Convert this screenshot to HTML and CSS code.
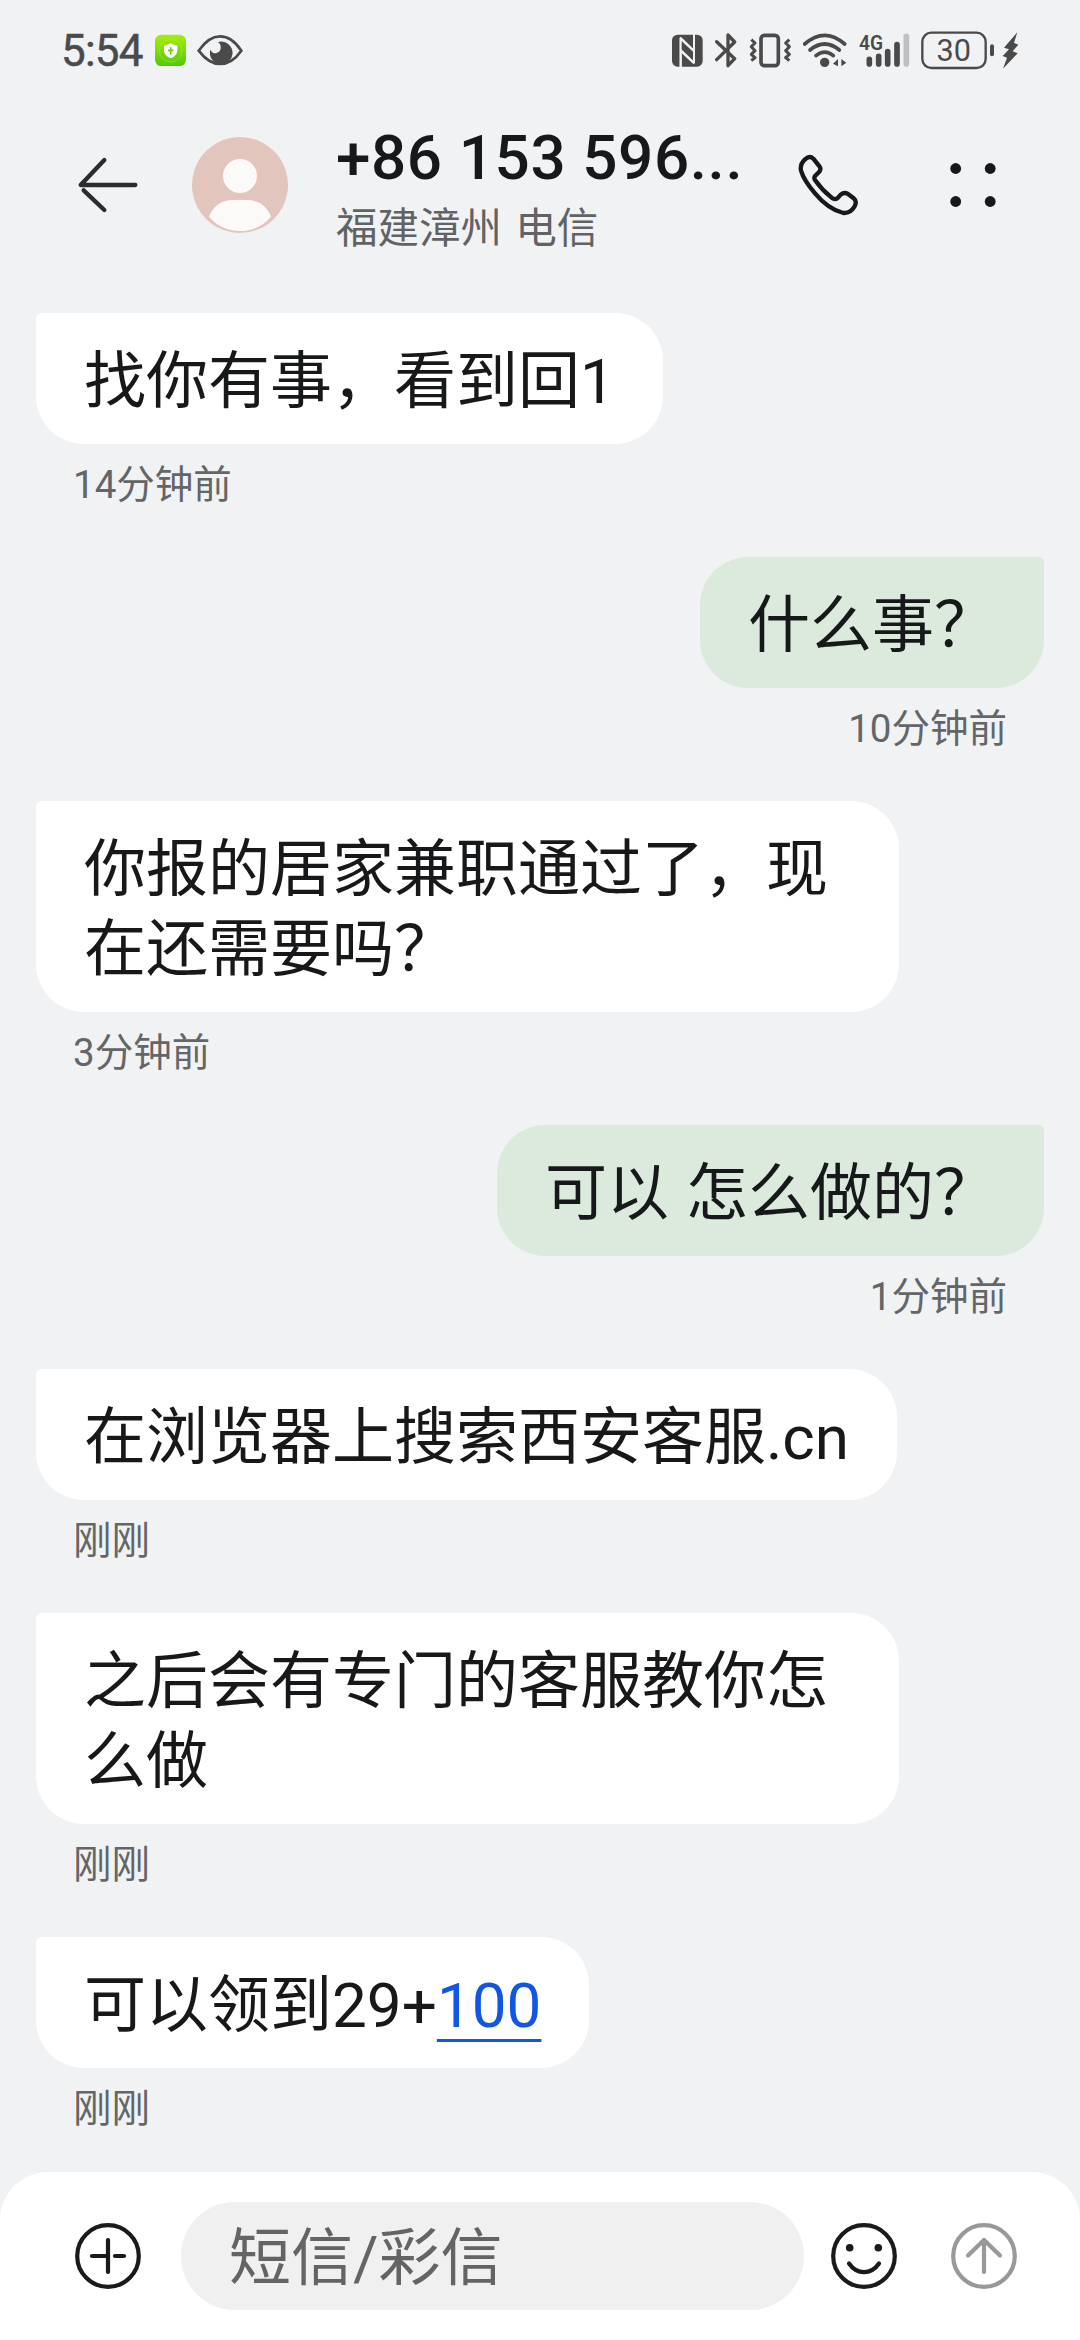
FILE: index.html
```html
<!DOCTYPE html>
<html lang="zh-CN">
<head>
<meta charset="utf-8">
<title>短信</title>
<link rel="stylesheet" href="styles.css">
</head>
<body>
<div class="screen">
  <div class="status">
    <div class="status-left">
      <span class="clock">5:54</span>
      <svg class="i-shield" width="31" height="40" viewBox="345 30 93 120"><defs><linearGradient id="g" x1="0" y1="0" x2="0" y2="1"><stop offset="0" stop-color="#a6ee0c"/><stop offset="1" stop-color="#54c80a"/></linearGradient></defs><rect x="345" y="44" width="93" height="94" rx="19" fill="url(#g)"/><circle cx="392" cy="92" r="34" fill="none" stroke="#b4ec4a" stroke-width="2" opacity=".7"/><path d="M392 70Q402 76 412 77V92Q411 107 392 115Q373 107 372 92V77Q382 76 392 70Z" fill="#fff"/><path d="M392 82V104M384 91H400" stroke="#69cf0c" stroke-width="5"/></svg>
      <svg class="i-eye" width="46" height="40" viewBox="473 30 138 120"><path d="M478 92Q508 49 542 49Q578 49 606 92Q578 132 542 132Q508 132 478 92Z" fill="none" stroke="#4a4a4a" stroke-width="8"/><path d="M541 65A34 34 0 1 1 513 89Q519 101 530 100Q546 96 544 79Q543 70 536 67Z" fill="#4a4a4a"/></svg>
    </div>
    <div class="status-right">
      <svg width="31" height="40" viewBox="66 30 93 120"><rect x="66" y="44" width="92" height="96" rx="17" fill="#4a4a4a"/><path d="M92 141V54L132 92V122M132 43V128M92 92L132 130" fill="none" stroke="#f1f2f4" stroke-width="6" stroke-linejoin="round"/><path d="M92 56L132 96V128L92 90Z" fill="#4a4a4a"/><path d="M92 141V56L132 94M132 43V128L92 90" fill="none" stroke="#f1f2f4" stroke-width="6" stroke-linejoin="round"/></svg>
      <svg class="i-bt" width="23" height="40" viewBox="194 30 69 120"><path d="M199 65L253 116L233 137V45L253 66L199 119" fill="none" stroke="#4a4a4a" stroke-width="10" stroke-linecap="round" stroke-linejoin="round"/></svg>
      <svg class="i-vib" width="43" height="40" viewBox="297 30 129 120"><rect x="333" y="46" width="52" height="91" rx="10" fill="none" stroke="#4a4a4a" stroke-width="11"/><path d="M304 59L315 69L304 80L315 92L304 103L315 113L304 122M418 59L407 69L418 80L407 92L418 103L407 113L418 122" fill="none" stroke="#4a4a4a" stroke-width="9" stroke-linejoin="round"/></svg>
      <svg class="i-wifi" width="44" height="40" viewBox="460 30 132 120"><g fill="none" stroke="#4a4a4a" stroke-width="11" stroke-linecap="round"><path d="M465 72Q525 20 585 72"/><path d="M481 90Q525 54 569 90"/><path d="M499 107Q525 86 551 107"/></g><circle cx="525" cy="127" r="14" fill="#4a4a4a"/><path d="M565 117V139L550 131ZM575 117V139L590 128Z" fill="#4a4a4a"/></svg>
      <svg class="i-sig" width="51" height="40" viewBox="626 30 153 120"><text x="626" y="90" textLength="72" lengthAdjust="spacingAndGlyphs" class="net">4G</text><g stroke="#4a4a4a" stroke-width="17" stroke-linecap="round"><path d="M657 118V132M685 109V132M712 95V132M740 74V132"/><path d="M768 49V132" stroke="#bfc0c1"/></g></svg>
      <svg class="i-bat" width="74" height="40" viewBox="812 30 222 120"><rect x="816" y="38" width="190" height="106" rx="27" fill="none" stroke="#4a4a4a" stroke-width="7"/><path d="M1025 79V103" stroke="#4a4a4a" stroke-width="12" stroke-linecap="round"/><text x="910" y="124" text-anchor="middle" class="pct">30</text></svg>
      <svg class="i-bolt" width="17" height="40" viewBox="1054 30 51 120"><path d="M1100 37L1060 83L1075 88L1056 108L1069 113L1057 146L1101 100L1086 94L1103 74L1090 69Z" fill="#4a4a4a"/></svg>
    </div>
  </div>

  <header class="header">
    <svg class="back" width="62" height="60" viewBox="114 135 186 180"><path d="M286 225H122L193 150M131 241L193 300" fill="none" stroke="#2b2c2e" stroke-width="13" stroke-linecap="round" stroke-linejoin="round"/></svg>
    <svg class="avatar" width="96" height="96" viewBox="0 0 96 96"><circle cx="48" cy="48" r="48" fill="#e2c6be"/><circle cx="48" cy="39" r="17" fill="#fcfaf9"/><path d="M17 79.500Q24 63 41 63H55Q72 63 79 79.500Q67 94 48 94Q29 94 17 79.500Z" fill="#fcfaf9"/></svg>
    <div class="who">
      <div class="number">+86 153 596...</div>
      <div class="place">福建漳州 电信</div>
    </div>
    <svg class="call" width="62" height="62" viewBox="111 102 186 186"><path d="M135 118Q149 105 160 116L179 140Q184 147 178 155L165 168Q161 174 165 180Q186 210 215 233Q226 241 234 233L242 224Q252 216 263 221L281 235Q291 243 285 257Q274 280 250 279Q205 268 165 220Q132 182 123 152Q119 133 135 118Z" fill="none" stroke="#17181a" stroke-width="13" stroke-linejoin="round"/></svg>
    <svg class="more" width="46" height="46" viewBox="0 0 46 46" fill="#17181a"><circle cx="5.700" cy="6.500" r="5.400"/><circle cx="40.200" cy="6.500" r="5.400"/><circle cx="5.700" cy="39.500" r="5.400"/><circle cx="40.200" cy="39.500" r="5.400"/></svg>
  </header>

  <main class="thread">
    <div class="msg"><div class="bubble">找你有事，看到回1</div><div class="time">14分钟前</div></div>
    <div class="msg mine"><div class="bubble">什么事？</div><div class="time">10分钟前</div></div>
    <div class="msg"><div class="bubble wide">你报的居家兼职通过了，现在还需要吗？</div><div class="time">3分钟前</div></div>
    <div class="msg mine"><div class="bubble">可以 怎么做的？</div><div class="time">1分钟前</div></div>
    <div class="msg"><div class="bubble">在浏览器上搜索西安客服.cn</div><div class="time">刚刚</div></div>
    <div class="msg"><div class="bubble wide">之后会有专门的客服教你怎么做</div><div class="time">刚刚</div></div>
    <div class="msg"><div class="bubble">可以领到29+<span class="link">100</span></div><div class="time">刚刚</div></div>
  </main>

  <footer class="composer">
    <svg width="66" height="66" viewBox="0 0 66 66" fill="none" stroke="#1a1a1a" stroke-width="4.200" stroke-linecap="round"><circle cx="33" cy="33" r="30.800"/><path d="M33 17V49M17 33H33M40 33H49"/></svg>
    <div class="field">短信/彩信</div>
    <svg class="smile" width="66" height="66" viewBox="0 0 66 66" fill="none" stroke="#1a1a1a" stroke-width="4.200" stroke-linecap="round"><circle cx="33" cy="33" r="30.800"/><path d="M18 40.500Q24 49 33 49.200Q42 49 48 40.500"/><g fill="#1a1a1a" stroke="none"><circle cx="18.700" cy="24.700" r="3.800"/><circle cx="47.300" cy="24.700" r="3.800"/></g></svg>
    <svg class="send" width="66" height="66" viewBox="0 0 66 66" fill="none" stroke="#999" stroke-width="4.200" stroke-linecap="round" stroke-linejoin="round"><circle cx="33" cy="33" r="30.800"/><path d="M33 49V17M17 32.500L33 17L49 32.500"/></svg>
  </footer>
</div>
</body>
</html>
```
FILE: styles.css
```css
* { box-sizing: border-box; }
body {
  margin: 0;
  background: #f1f2f4;
  font-family: Roboto, "Noto Sans CJK SC", sans-serif;
  color: #17181a;
}
svg { display: block; flex: none; }
.screen {
  width: 1080px;
  height: 2340px;
  display: flex;
  flex-direction: column;
  overflow: hidden;
}
.status {
  height: 100px;
  padding: 0 61px 0 61px;
  display: flex;
  justify-content: space-between;
  align-items: center;
}
.status-left, .status-right { display: flex; align-items: center; }
.clock {
  width: 94px;
  font-size: 44px;
  line-height: 50px;
  letter-spacing: -0.8px;
  color: #4a4a4a;
  padding-top: 2px;
  -webkit-text-stroke: 0.5px #4a4a4a;
}
.i-eye { margin-left: 11px; }
.i-bt { margin-left: 12px; }
.i-vib { margin-left: 11px; }
.i-wifi { margin-left: 11px; }
.i-sig { margin-left: 12px; }
.i-bat { margin-left: 11px; }
.i-bolt { margin-left: 7px; }
.net { font-size: 61px; font-weight: 600; fill: #4a4a4a; }
.pct { font-size: 92px; fill: #4a4a4a; }

.header {
  height: 170px;
  padding-left: 78px;
  display: flex;
  align-items: center;
}
.avatar { margin-left: 52px; }
.who { width: 412px; margin-left: 48px; }
.number {
  font-size: 62px;
  font-weight: 500;
  line-height: 70px;
  letter-spacing: 0.6px;
  white-space: nowrap;
}
.place {
  margin-top: 8px;
  margin-bottom: -10px;
  font-size: 41.5px;
  line-height: 56px;
  word-spacing: 3px;
  color: #616264;
  white-space: nowrap;
}
.call { margin-left: 49px; }
.more { margin-left: 91px; }

.thread {
  flex: 1;
  padding: 43px 36px 0;
  display: flex;
  flex-direction: column;
  gap: 49px;
}
.msg { display: flex; flex-direction: column; align-items: flex-start; }
.mine { align-items: flex-end; }
.bubble {
  padding: 29px 48px 22px;
  background: #fff;
  border-radius: 6px 48px 48px 48px;
  font-size: 62px;
  line-height: 80px;
  word-spacing: 1.5px;
}
.wide { width: 863px; }
.mine .bubble { background: #dbeadd; border-radius: 48px 6px 48px 48px; }
.time {
  margin-top: 18px;
  padding: 0 37px;
  font-size: 38.5px;
  line-height: 46px;
  color: #646567;
}
.link {
  color: #1256e6;
  text-decoration: underline;
  text-decoration-thickness: 3px;
  text-underline-offset: 12px;
}

.composer {
  height: 168px;
  padding: 30px 63px 0 75px;
  display: flex;
  align-items: flex-start;
  background: #fff;
  border-radius: 48px 48px 0 0;
}
.composer svg { margin-top: 21px; }
.field {
  flex: none;
  width: 623px;
  height: 108px;
  margin-left: 40px;
  padding: 3px 48px 0;
  border-radius: 54px;
  background: #f0f0f0;
  color: #646464;
  font-size: 62px;
  line-height: 108px;
}
.composer .smile { margin-left: 27px; }
.composer .send { margin-left: 54px; }
```
